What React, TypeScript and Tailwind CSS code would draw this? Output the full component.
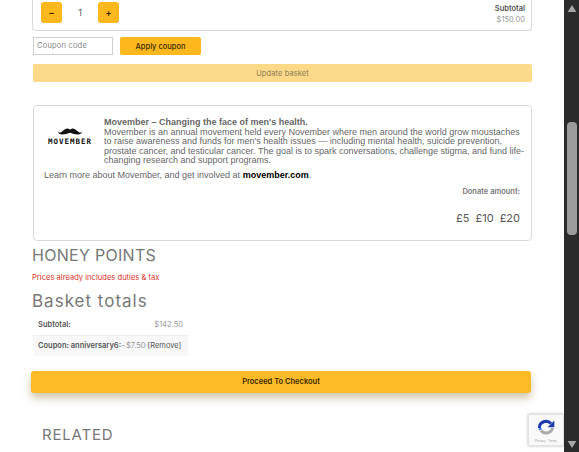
export default function App() {
  const poppins = "font-['Inter','Noto_Sans',sans-serif]";
  return (
    <div className={`flex h-[452px] w-[579px] overflow-hidden bg-white ${poppins}`}>
      <main className="relative w-[564px] shrink-0 overflow-hidden pl-[32px]">
        <section className="flex h-[31px] w-[500px] items-start justify-between rounded-b-[4px] border border-t-0 border-[#d9d9d9] pl-[8px] pr-[6px] pt-[2px]">
          <div className="flex items-center">
            <button className="flex h-[21px] w-[21px] items-center justify-center rounded-[3px] bg-[#fdb81e] text-[9px] font-bold text-[#3b2a00]">−</button>
            <span className="flex h-[21px] w-[36px] items-center justify-center text-[9px] text-[#555]">1</span>
            <button className="flex h-[21px] w-[21px] items-center justify-center rounded-[3px] bg-[#fdb81e] text-[9px] font-bold text-[#3b2a00]">+</button>
          </div>
          <div className="flex flex-col items-end pt-[1px] text-[7.5px] leading-[11px]">
            <span className="font-semibold text-[#555]">Subtotal</span>
            <span className="text-[#999]">$150.00</span>
          </div>
        </section>
        <div className="mt-[6px] flex items-center gap-[7px] pl-px">
          <div className="flex h-[18px] w-[80px] items-center border border-[#cfcfcf] pl-[3px] text-[7.5px] tracking-[0.2px] text-[#888]">Coupon code</div>
          <button className="flex h-[18px] w-[81px] items-center justify-center rounded-[2px] bg-[#fdb81e] pt-px text-[7.5px] font-medium text-[#3b2a00]">Apply coupon</button>
        </div>
        <button className="ml-px mt-[9px] flex h-[18px] w-[499px] items-center justify-center rounded-[2px] bg-[#fdd98a] pt-[2px] text-[7.5px] tracking-[0.1px] text-[#8a7a55]">Update basket</button>
        <section className="ml-px mt-[23px] h-[136px] w-[499px] rounded-[4px] border border-[#d9d9d9] pl-[10px] pr-[11px] pt-[12px] font-['Liberation_Sans',sans-serif] text-[9px] leading-[9.5px] text-[#666]">
          <div className="-mr-[7px] flex">
            <div className="flex w-[60px] shrink-0 flex-col items-center pl-[2px] pr-[10px] pt-[9px]">
              <svg viewBox="0 0 40 12" className="h-[8px] w-[24px]" aria-hidden="true">
                <path d="M0 6c1 3 3 3 5 2 4-2 7-6 10-6 2 0 4 1 5 2 1-1 3-2 5-2 3 0 6 4 10 6 2 1 4 1 5-2 0 4-3 6-7 6-5 0-9-2-13-3-4 1-8 3-13 3-4 0-7-2-7-6z" fill="#111" />
              </svg>
              <span className="mt-[3px] whitespace-nowrap font-['DejaVu_Sans_Mono',monospace] text-[7.5px] font-bold leading-[8px] tracking-[1px] text-[#111]">MOVEMBER</span>
            </div>
            <div>
              <p className="font-bold">Movember – Changing the face of men's health.</p>
              <p>Movember is an annual movement held every November where men around the world grow moustaches to raise awareness and funds for men's health issues — including mental health, suicide prevention, prostate cancer, and testicular cancer. The goal is to spark conversations, challenge stigma, and fund life-changing research and support programs.</p>
            </div>
          </div>
          <p className="mt-[4px] leading-[11px]">Learn more about Movember, and get involved at <b className="text-black">movember.com</b>.</p>
          <p className={`mt-[6px] text-right text-[7.5px] font-semibold leading-[10px] text-[#777] ${poppins}`}>Donate amount:</p>
          <div className={`mt-[14px] flex justify-end gap-[6px] text-[11px] leading-[14px] text-[#555] ${poppins}`}>
            <span>£5</span><span>£10</span><span>£20</span>
          </div>
        </section>
        <h2 className="mt-[3px] text-[16px] font-normal leading-[22px] tracking-[0.3px] text-[#777]">HONEY POINTS</h2>
        <p className="mt-[7px] text-[7.6px] leading-[10px] text-[#d9362b]">Prices already includes duties &amp; tax</p>
        <h2 className="mt-[7px] text-[17px] font-normal leading-[22px] tracking-[1px] text-[#777]">Basket totals</h2>
        <div className="ml-px mt-[3px] w-[155px] text-[7.5px] text-[#555]">
          <div className="flex h-[21px] items-center justify-between border-b border-[#eee] px-[5px]">
            <b className="font-semibold">Subtotal:</b><span className="text-[#999]">$142.50</span>
          </div>
          <div className="flex h-[20px] items-center whitespace-nowrap bg-[#f8f8f8] px-[5px]">
            <b className="font-semibold">Coupon: anniversary6:</b><span className="text-[#999]">−$7.50</span><span className="ml-[2px]">[Remove]</span>
          </div>
        </div>
        <button className="-ml-px mt-[15px] flex h-[22px] w-[500px] items-center justify-center rounded-[3px] bg-[#febb27] text-[7.5px] font-semibold text-[#3b2a00] shadow-[0_5px_8px_rgba(120,90,10,0.35)]">Proceed To Checkout</button>
        <h2 className="ml-[10px] mt-[32px] text-[15px] font-normal leading-[20px] tracking-[0.8px] text-[#777]">RELATED</h2>
        <div className="absolute right-0 top-[414px] flex h-[32px] w-[36px] flex-col items-center justify-center border border-[#e3e3e3] bg-[#f9f9f9] shadow-[0_0_3px_rgba(0,0,0,0.25)]">
          <svg viewBox="0 0 24 24" className="h-[20px] w-[20px]" fill="none" aria-hidden="true">
            <path d="M4 12a8 8 0 0 1 14-5.3" stroke="#1c3aa9" strokeWidth="3.6" />
            <path d="M22 3v8h-8z" fill="#1c3aa9" />
            <path d="M5 12a7 7 0 0 0 .4 2.3" stroke="#4285f4" strokeWidth="3.6" />
            <path d="M6 15a8 8 0 0 0 14-3" stroke="#ababab" strokeWidth="3.6" />
          </svg>
          <span className="mt-[1px] text-[3px] leading-[4px] text-[#999]">Privacy · Terms</span>
        </div>
      </main>
      <aside className="flex h-full w-[15px] flex-col items-center justify-between bg-[#2b2b2b]">
        <svg viewBox="0 0 10 8" className="mt-[5px] h-[7px] w-[10px]" aria-hidden="true"><path d="M5 0l5 8H0z" fill="#a6a6a6" /></svg>
        <div className="absolute left-[567px] top-[122px] h-[113px] w-[10px] rounded-[4px] bg-[#9b9b9b]" />
        <svg viewBox="0 0 10 8" className="mb-[4px] h-[7px] w-[10px]" aria-hidden="true"><path d="M0 0h10L5 8z" fill="#a6a6a6" /></svg>
      </aside>
    </div>
  );
}
